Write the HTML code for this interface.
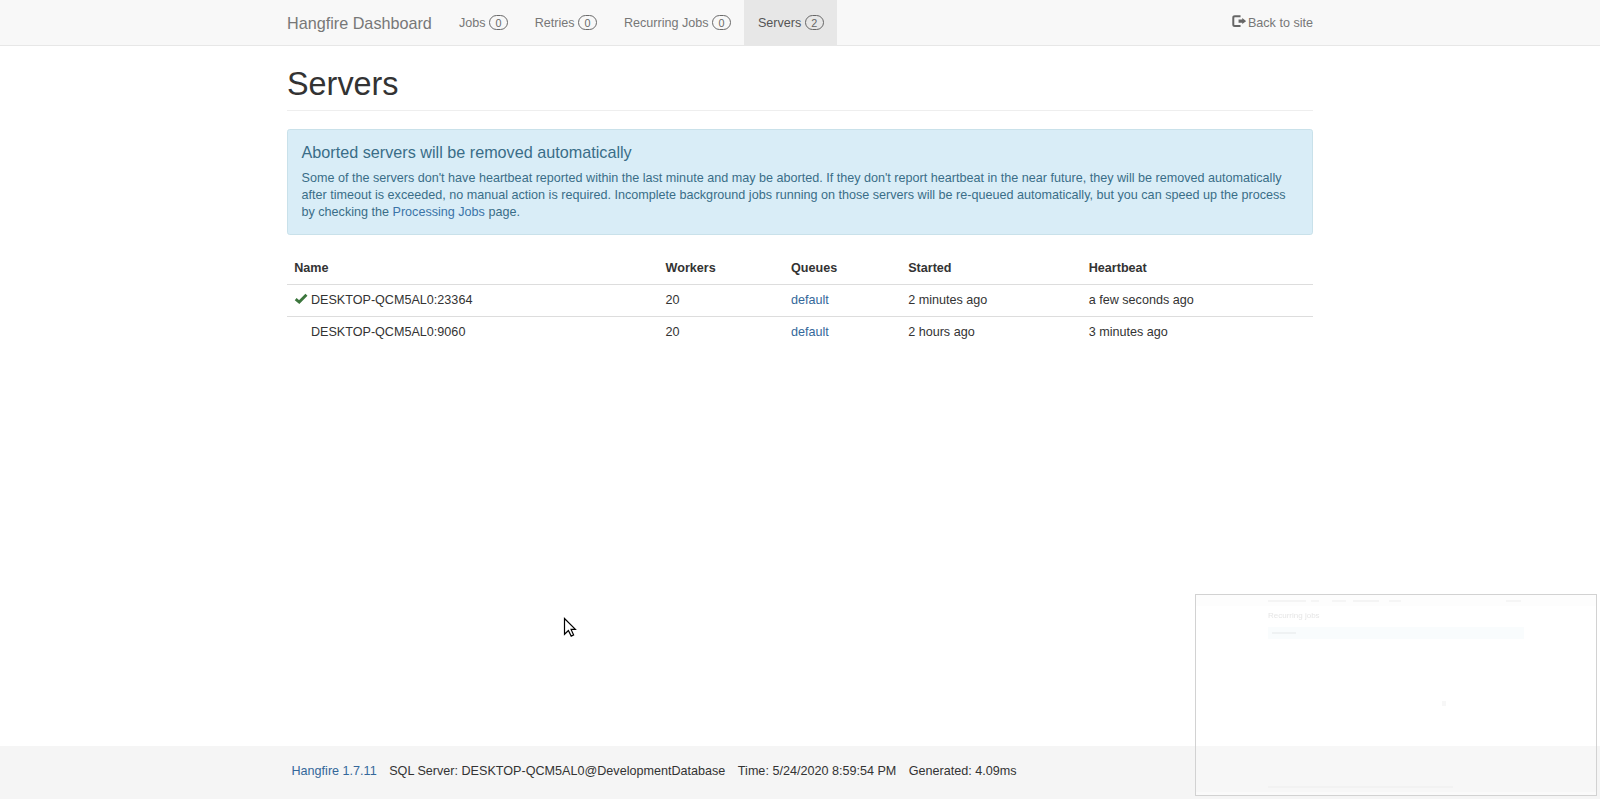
<!DOCTYPE html>
<html>
<head>
<meta charset="utf-8">
<style>
html,body{margin:0;padding:0;width:1600px;height:799px;overflow:hidden;background:#fff;}
*{box-sizing:border-box;}
#pg{zoom:0.9;position:relative;width:1777.78px;height:887.78px;font-family:"Liberation Sans",sans-serif;font-size:14px;line-height:18.7px;color:#333;}
a{color:#34679a;text-decoration:none;}
.container{width:1170px;margin:0 auto;padding:0 15px;}
.navbar{position:absolute;top:0;left:0;right:0;height:51px;background:#f8f8f8;border-bottom:1px solid #e7e7e7;}
.navbar .container{position:relative;height:50px;}
.brand{float:left;margin-left:-15px;padding:15px;font-size:18px;line-height:20px;height:50px;color:#777;}
.nav{float:left;margin:0;padding:0;list-style:none;}
.nav li{float:left;}
.nav li a{display:block;padding:15px;line-height:20px;height:50px;color:#777;}
.nav li.active a{background:#e7e7e7;color:#555;}
.badge{display:inline-block;padding:2px 6px 1px;font-size:12px;line-height:12px;text-align:center;white-space:nowrap;vertical-align:0px;border-radius:10px;border:1px solid #6a6a6a;color:#6a6a6a;background:transparent;}
.active .badge{border-color:#666;color:#666;}
.nav-right{float:right;margin-right:-15px;}
.logout{display:inline-block;width:16px;height:14px;vertical-align:-1px;margin-right:2px;}
.page{position:absolute;top:51px;left:0;right:0;}
h1.page-header{margin:24px 0 20px;padding-bottom:8px;border-bottom:1px solid #eee;font-size:36px;font-weight:500;line-height:1.1;}
.alert{padding:15px;margin-bottom:19.3px;border:1px solid #c9e1ea;border-radius:3px;background:#d9edf7;color:#3a6d88;}
.alert h4{margin:0 0 8.8px;font-size:18px;font-weight:500;line-height:1.1;}
.alert p{margin:0;line-height:19px;}
.alert a{color:#3a74a8;}
table{width:1140px;border-collapse:collapse;border-spacing:0;table-layout:fixed;}
th{text-align:left;padding:8px;vertical-align:bottom;border-bottom:1px solid #ddd;font-weight:bold;}
td{padding:8px;border-top:1px solid #ddd;}
.ok{overflow:visible;display:inline-block;width:15px;height:14px;vertical-align:top;margin-top:2px;margin-right:3.6px;}
.footer{position:absolute;bottom:0;left:0;right:0;height:59px;background:#f5f5f5;}
.footer ul{list-style:none;margin:19px 0;padding:0;}
.footer li{display:inline-block;padding:0 5px;}
#cursor{position:absolute;left:563px;top:617px;width:16px;height:22px;}
#thumb{position:absolute;left:1195px;top:594px;width:402px;height:202px;border:1px solid #d2d2d2;overflow:hidden;}
#thumb div{position:absolute;}
</style>
</head>
<body>
<div id="pg">
<div class="navbar">
  <div class="container">
    <a class="brand" href="#">Hangfire Dashboard</a>
    <ul class="nav">
      <li><a href="#">Jobs <span class="badge">0</span></a></li>
      <li><a href="#">Retries <span class="badge">0</span></a></li>
      <li><a href="#">Recurring Jobs <span class="badge">0</span></a></li>
      <li class="active"><a href="#">Servers <span class="badge">2</span></a></li>
    </ul>
    <ul class="nav nav-right">
      <li><a href="#"><svg class="logout" viewBox="0 0 16 14"><path d="M9.5 1.32H3.1Q1.43 1.32 1.43 3V10.5Q1.43 12.2 3.1 12.2H9.5" fill="none" stroke="#666" stroke-width="2.2"/><path d="M7.3 4.95H11.4V3.45L15.6 6.8L11.4 10.1V8.65H7.3Z" fill="#666"/></svg>Back to site</a></li>
    </ul>
  </div>
</div>
<div class="page">
  <div class="container">
    <h1 class="page-header">Servers</h1>
    <div class="alert">
      <h4>Aborted servers will be removed automatically</h4>
      <p>Some of the servers don't have heartbeat reported within the last minute and may be aborted. If they don't report heartbeat in the near future, they will be removed automatically after timeout is exceeded, no manual action is required. Incomplete background jobs running on those servers will be re-queued automatically, but you can speed up the process by checking the <a href="#">Processing Jobs</a> page.</p>
    </div>
    <table>
      <colgroup><col style="width:412.6px"><col style="width:139.4px"><col style="width:130.2px"><col style="width:200.6px"><col style="width:257.2px"></colgroup>
      <thead><tr><th>Name</th><th>Workers</th><th>Queues</th><th>Started</th><th>Heartbeat</th></tr></thead>
      <tbody>
        <tr><td><svg class="ok" viewBox="0 0 15 14"><path d="M1.84 5.79L5.79 8.9L13.84 0.84" fill="none" stroke="#3c763d" stroke-width="3.2"/></svg>DESKTOP-QCM5AL0:23364</td><td>20</td><td><a href="#">default</a></td><td>2 minutes ago</td><td>a few seconds ago</td></tr>
        <tr><td><span class="ok"></span>DESKTOP-QCM5AL0:9060</td><td>20</td><td><a href="#">default</a></td><td>2 hours ago</td><td>3 minutes ago</td></tr>
      </tbody>
    </table>
  </div>
</div>
<div class="footer">
  <div class="container">
    <ul>
      <li><a href="#">Hangfire 1.7.11</a></li>
      <li>SQL Server: DESKTOP-QCM5AL0@DevelopmentDatabase</li>
      <li>Time: 5/24/2020 8:59:54 PM</li>
      <li>Generated: 4.09ms</li>
    </ul>
  </div>
</div>
</div>
<div id="thumb">
  <div style="left:0;top:0;width:400px;height:11px;background:rgba(0,0,0,0.008);"></div>
  <div style="left:72px;top:5px;width:38px;height:2px;background:rgba(0,0,0,0.035);filter:blur(0.6px);"></div>
  <div style="left:115px;top:5px;width:8px;height:2px;background:rgba(0,0,0,0.03);filter:blur(0.6px);"></div>
  <div style="left:136px;top:5px;width:14px;height:2px;background:rgba(0,0,0,0.03);filter:blur(0.6px);"></div>
  <div style="left:157px;top:5px;width:26px;height:2px;background:rgba(0,0,0,0.035);filter:blur(0.6px);"></div>
  <div style="left:193px;top:5px;width:12px;height:2px;background:rgba(0,0,0,0.03);filter:blur(0.6px);"></div>
  <div style="left:310px;top:5px;width:15px;height:2px;background:rgba(0,0,0,0.03);filter:blur(0.6px);"></div>
  <div style="left:72px;top:17px;width:60px;height:9px;font:8px/8px 'Liberation Sans',sans-serif;color:#e6e6e6;white-space:nowrap;filter:blur(0.3px);">Recurring jobs</div>
  <div style="left:72px;top:32px;width:256px;height:12px;background:rgba(90,170,210,0.035);"></div>
  <div style="left:76px;top:37px;width:24px;height:2px;background:rgba(0,0,0,0.04);filter:blur(0.5px);"></div>
  <div style="left:0;top:151px;width:400px;height:49px;background:rgba(255,255,255,0.25);"></div>
  <div style="left:0;top:197px;width:400px;height:3px;background:rgba(255,255,255,0.4);"></div>
  <div style="left:72px;top:191px;width:185px;height:2px;background:rgba(0,0,0,0.02);filter:blur(0.5px);"></div>
  <div style="left:246px;top:106px;width:4px;height:5px;background:rgba(0,0,0,0.03);filter:blur(0.5px);"></div>
</div>
<svg id="cursor" viewBox="0 0 16 22"><path d="M1.5 1.5V17.3L5.4 13.6L8.2 19.1L10.6 18L8.1 12.4H12.4Z" fill="#fff" stroke="#000" stroke-width="1.2" stroke-linejoin="miter"/></svg>
</body>
</html>
